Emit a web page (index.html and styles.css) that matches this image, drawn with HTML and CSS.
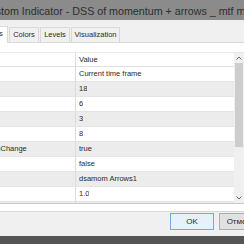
FILE: index.html
```html
<!DOCTYPE html>
<html lang="en">

<head>
    <meta charset="UTF-8">
    <title>Custom Indicator</title>
    <link rel="stylesheet" href="styles.css">
</head>

<body>
    <div class="window">
        <div class="titlebar">
            <span class="title">Custom Indicator - DSS of momentum + arrows _ mtf mt4</span>
        </div>

        <div class="dialog">
            <div class="tabs">
                <div class="tab tab-active">Inputs</div>
                <div class="tab tab-colors">Colors</div>
                <div class="tab tab-levels">Levels</div>
                <div class="tab tab-vis">Visualization</div>
            </div>

            <div class="panel">
                <div class="grid">
                    <div class="rows">
                        <div class="row head">
                            <div class="cell name"></div>
                            <div class="cell value">Value</div>
                        </div>
                        <div class="row">
                            <div class="cell name"></div>
                            <div class="cell value">Current time frame</div>
                        </div>
                        <div class="row odd">
                            <div class="cell name"></div>
                            <div class="cell value">18</div>
                        </div>
                        <div class="row">
                            <div class="cell name"></div>
                            <div class="cell value">6</div>
                        </div>
                        <div class="row odd">
                            <div class="cell name"></div>
                            <div class="cell value">3</div>
                        </div>
                        <div class="row">
                            <div class="cell name"></div>
                            <div class="cell value">8</div>
                        </div>
                        <div class="row odd">
                            <div class="cell name cut">arrowsOnChange</div>
                            <div class="cell value">true</div>
                        </div>
                        <div class="row">
                            <div class="cell name"></div>
                            <div class="cell value">false</div>
                        </div>
                        <div class="row odd">
                            <div class="cell name"></div>
                            <div class="cell value">dsamom Arrows1</div>
                        </div>
                        <div class="row">
                            <div class="cell name"></div>
                            <div class="cell value">1.0</div>
                        </div>
                        <div class="row odd">
                            <div class="cell name"></div>
                            <div class="cell value">1.0</div>
                        </div>
                    </div>

                    <div class="scrollbar">
                        <div class="arrow">
                            <svg width="6" height="4" viewBox="0 0 6 4"><polyline points="0.5,3.5 3,1 5.5,3.5" fill="none" stroke="#666" stroke-width="1"/></svg>
                        </div>
                        <div class="track">
                            <div class="thumb"></div>
                        </div>
                        <div class="arrow">
                            <svg width="6" height="4" viewBox="0 0 6 4"><polyline points="0.5,0.5 3,3 5.5,0.5" fill="none" stroke="#666" stroke-width="1"/></svg>
                        </div>
                    </div>
                </div>
            </div>

            <div class="buttons">
                <button class="btn btn-ok">OK</button>
                <button class="btn">Отмена</button>
            </div>
        </div>

        <div class="taskbar"></div>
    </div>
</body>

</html>
```

FILE: styles.css
```css
body {
    margin: 0;
    padding: 0;
    font-family: "Liberation Sans", Arial, sans-serif;
    background-color: #f0f0f0;
}

.window {
    width: 244px;
    height: 244px;
    overflow: hidden;
    display: flex;
    flex-direction: column;
}

.titlebar {
    height: 20px;
    flex: none;
    background-color: #8b8b8b;
    color: #2e2e2e;
    font-size: 10.7px;
    line-height: 20px;
    white-space: nowrap;
    overflow: hidden;
}

.title {
    display: block;
    text-indent: -18px;
    padding-top: 1px;
}

.dialog {
    flex: 1;
    background-color: #f0f0f0;
    padding-top: 6px;
    display: flex;
    flex-direction: column;
}

.tabs {
    display: flex;
    height: 16px;
    margin-left: -23px;
    position: relative;
    z-index: 1;
}

.tab {
    box-sizing: border-box;
    height: 15px;
    margin-top: 1px;
    border: 1px solid #d9d9d9;
    border-bottom: none;
    background-color: #f0f0f0;
    font-size: 7.5px;
    line-height: 14px;
    color: #2a2a2a;
    text-align: center;
    white-space: nowrap;
    margin-right: 1px;
}

.tab-active {
    width: 31px;
    height: 17px;
    margin-top: 0;
    background-color: #ffffff;
}

.tab-colors {
    width: 30px;
}

.tab-levels {
    width: 30px;
}

.tab-vis {
    width: 49px;
}

.panel {
    background-color: #ffffff;
    border-top: 1px solid #d9d9d9;
    border-bottom: 1px solid #d9d9d9;
    padding: 9px 0 7px 0;
    height: 152px;
    flex: none;
}

.grid {
    display: flex;
    height: 152px;
    overflow: hidden;
    box-sizing: border-box;
    border-top: 1px solid #e8e8e8;
    border-bottom: 1px solid #c9c9c9;
}

.rows {
    flex: 1;
    overflow: hidden;
}

.row {
    display: flex;
    height: 15px;
    box-sizing: border-box;
    border-bottom: 1px solid #e4e4e4;
    font-size: 7.5px;
    color: #2a2a2a;
    white-space: nowrap;
}

.row.head {
    height: 14px;
    background-color: #ffffff;
    border-bottom: 1px solid #e0e0e0;
}

.row.odd {
    background-color: #ececec;
}

.cell {
    line-height: 14px;
    overflow: hidden;
}

.head .cell {
    line-height: 13px;
}

.name {
    width: 76px;
    flex: none;
    box-sizing: border-box;
    border-right: 1px solid #dcdcdc;
}

.name.cut {
    text-indent: -32px;
}

.value {
    padding-left: 3px;
}

.scrollbar {
    width: 10px;
    flex: none;
    background-color: #f0f0f0;
    display: flex;
    flex-direction: column;
}

.arrow {
    height: 10px;
    display: flex;
    align-items: center;
    justify-content: center;
}

.track {
    flex: 1;
    padding: 0 1px;
}

.thumb {
    height: 84px;
    background-color: #cdcdcd;
}

.buttons {
    flex: 1;
    display: flex;
    align-items: flex-start;
    padding: 1px 0 0 170px;
    gap: 5px;
    white-space: nowrap;
}

.btn {
    flex: none;
    width: 44px;
    height: 17px;
    padding: 0;
    border: 1px solid #adadad;
    background-color: #e1e1e1;
    font-family: "Liberation Sans", Arial, sans-serif;
    font-size: 8px;
    color: #2a2a2a;
}

.btn-ok {
    border-color: #7aa7d6;
    background-color: #e5f1fb;
}

.taskbar {
    height: 8px;
    flex: none;
    background-color: #555555;
}
```
